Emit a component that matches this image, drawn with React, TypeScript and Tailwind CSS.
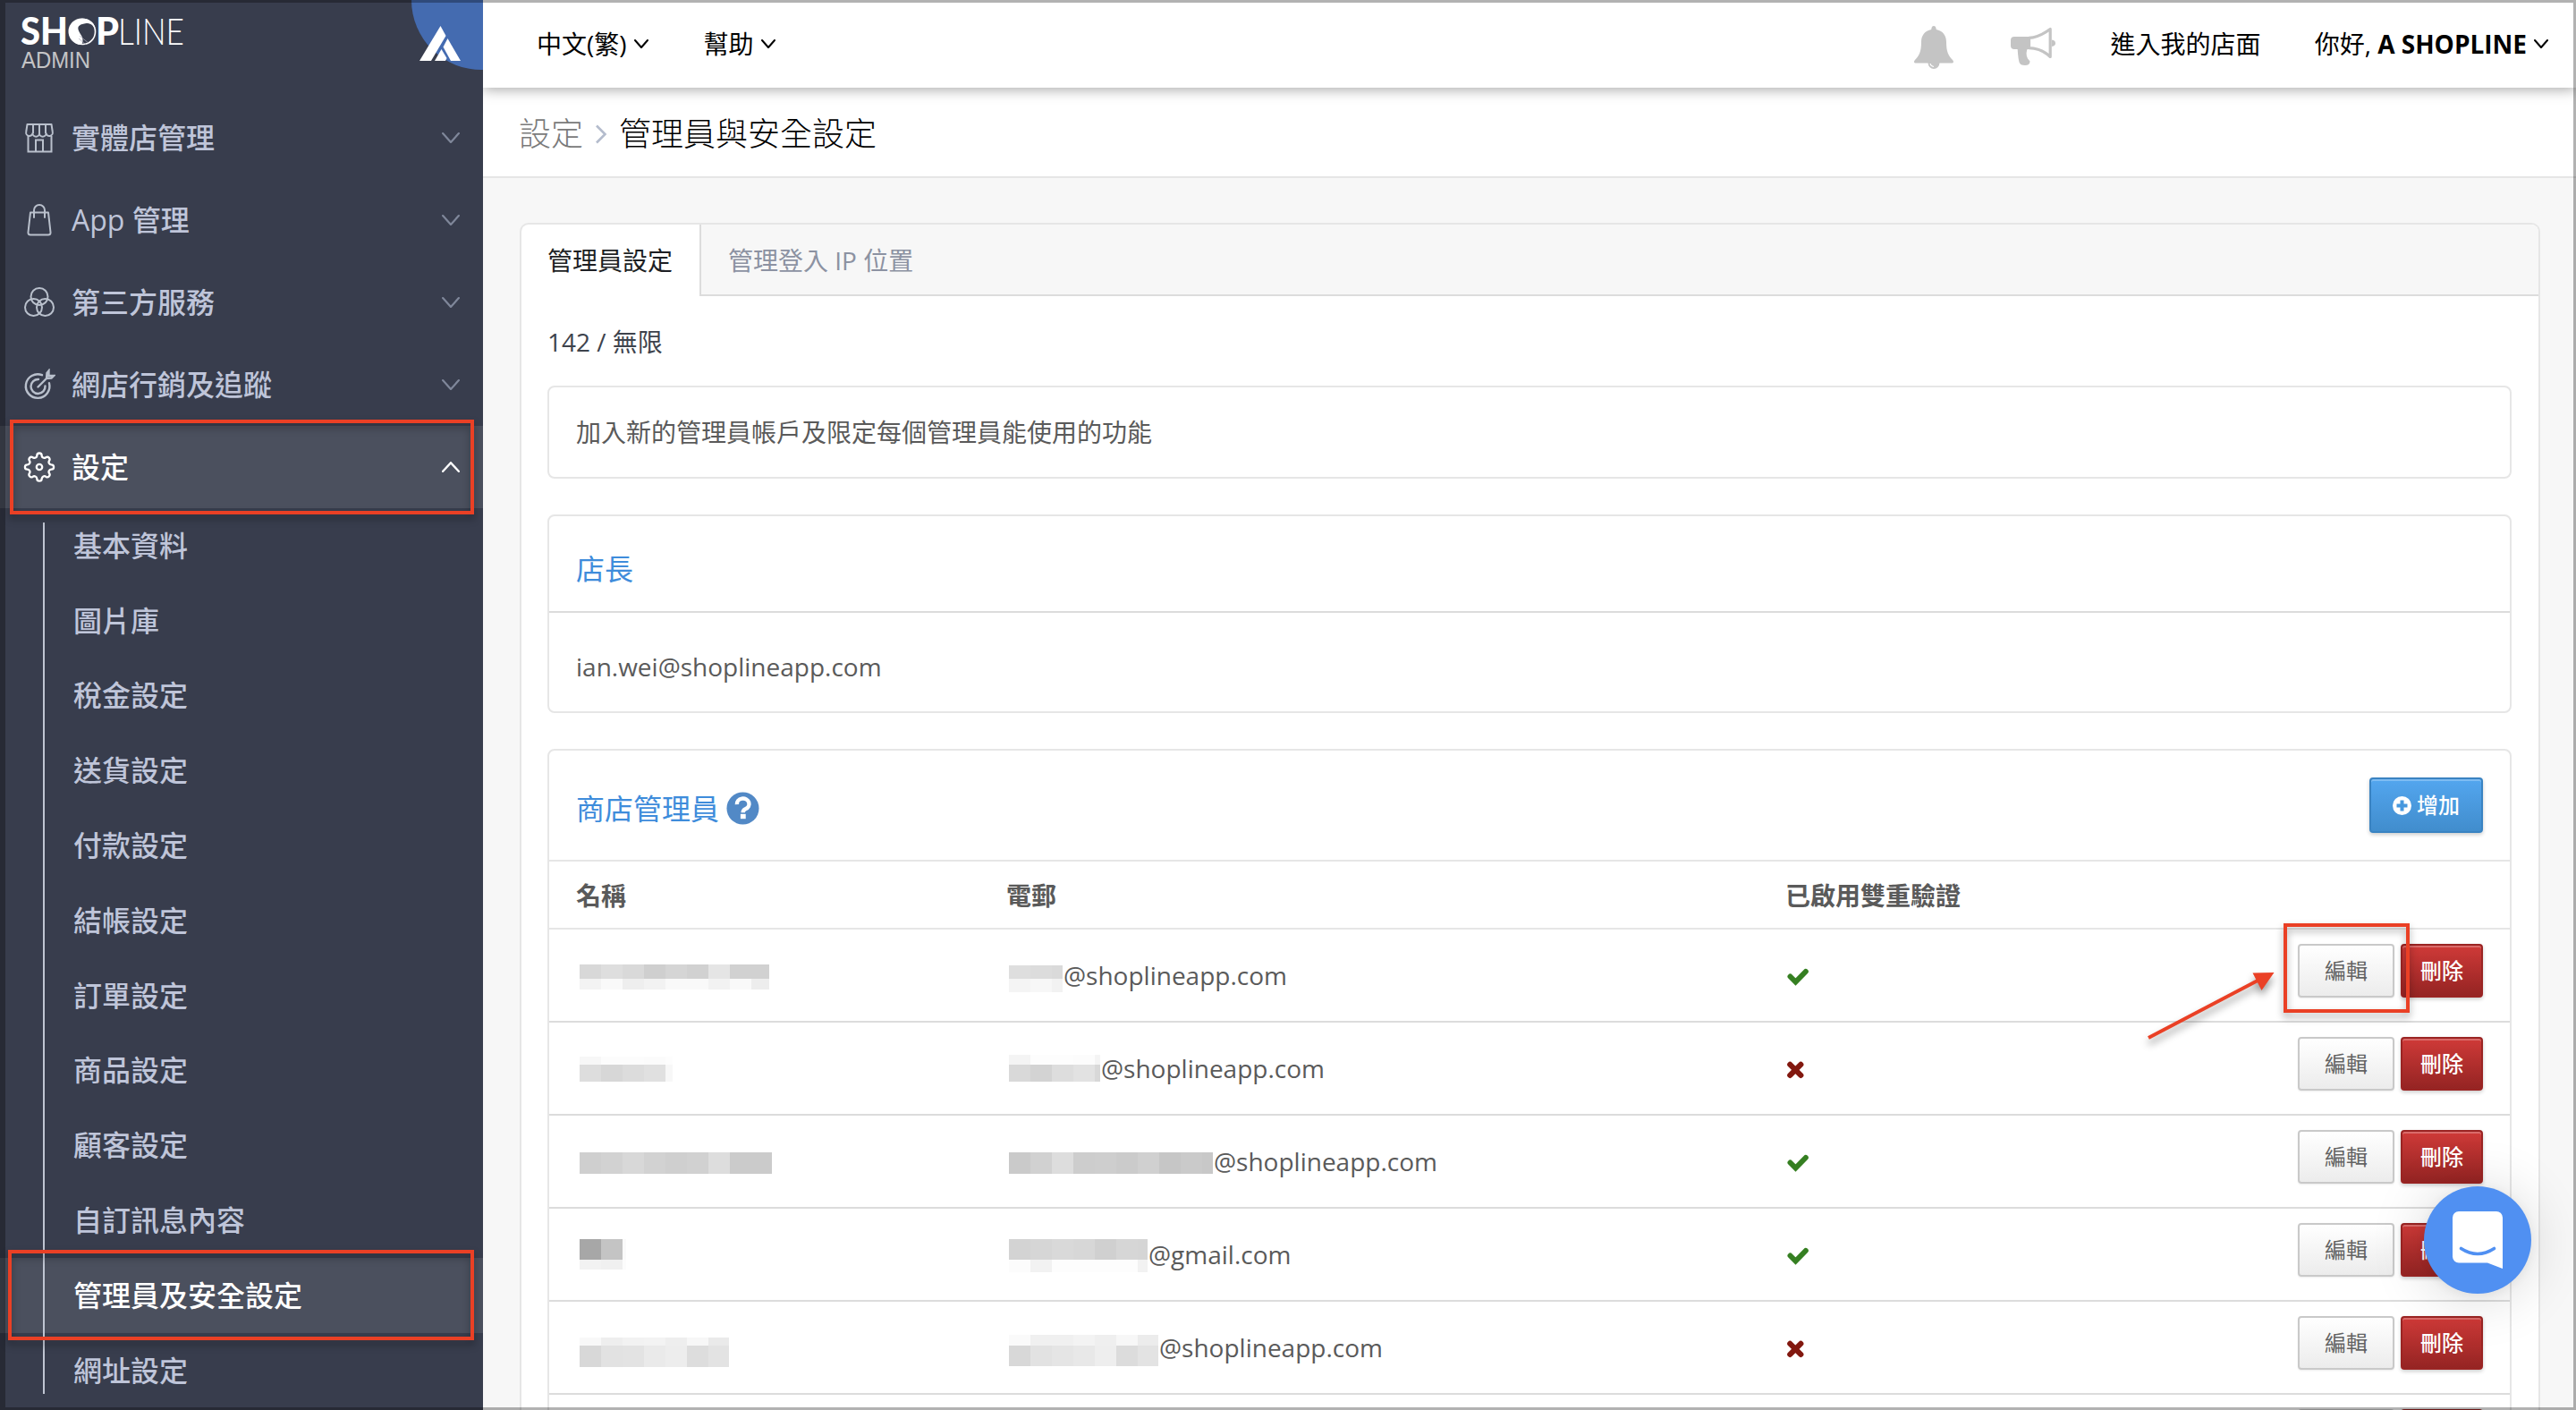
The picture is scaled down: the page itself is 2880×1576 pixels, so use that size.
import React from "react";

type Row = { name: Mosaic; mail: Mosaic; domain: string; ok: boolean };
// y: top edge in the row, hs: heights of the bands, rows: grey level of each 24px cell
type Mosaic = { y: number; w: number; hs: number[]; rows: number[][] };

const ROWS: Row[] = [
  {
    name: { y: 39, w: 212, hs: [16, 12], rows: [[216, 222, 217, 207, 213, 209, 229, 209, 209], [243, 249, 238, 242, 249, 249, 242, 249, 237]] },
    mail: { y: 40, w: 60, hs: [15, 15], rows: [[222, 220, 218], [244, 247, 242]] },
    domain: "@shoplineapp.com",
    ok: true,
  },
  {
    name: { y: 38, w: 104, hs: [9, 19], rows: [[247, 252, 252, 251, 253], [221, 215, 220, 224, 247]] },
    mail: { y: 36, w: 102, hs: [11, 19], rows: [[244, 253, 253, 252, 244], [217, 211, 221, 226, 216]] },
    domain: "@shoplineapp.com",
    ok: false,
  },
  {
    name: { y: 41, w: 215, hs: [24], rows: [[207, 210, 216, 210, 207, 209, 221, 203, 203]] },
    mail: { y: 41, w: 228, hs: [24], rows: [[202, 209, 221, 205, 206, 203, 208, 198, 202, 200]] },
    domain: "@shoplineapp.com",
    ok: true,
  },
  {
    name: { y: 34, w: 52, hs: [23, 11], rows: [[167, 196, 250], [242, 240, 252]] },
    mail: { y: 34, w: 155, hs: [23, 14], rows: [[211, 214, 217, 215, 208, 214, 213], [252, 242, 253, 253, 253, 253, 242]] },
    domain: "@gmail.com",
    ok: true,
  },
  {
    name: { y: 40, w: 167, hs: [9, 24], rows: [[248, 238, 242, 243, 238, 247, 234], [216, 226, 227, 234, 237, 221, 227]] },
    mail: { y: 37, w: 167, hs: [12, 23], rows: [[250, 240, 240, 243, 239, 247, 236], [216, 226, 229, 232, 238, 220, 227]] },
    domain: "@shoplineapp.com",
    ok: false,
  },
];

function MosaicBlock({ m }: { m: Mosaic }) {
  const h = m.hs.reduce((a, b) => a + b, 0);
  let y = 0;
  return (
    <svg width={m.w} height={h} style={{ marginTop: m.y }} className="shrink-0" shapeRendering="crispEdges">
      {m.rows.map((r, i) => {
        const top = y;
        y += m.hs[i];
        return r.map((g, j) => (
          <rect key={`${i}-${j}`} x={j * 24} y={top} width={24} height={m.hs[i]} fill={`rgb(${g},${g},${g})`} />
        ));
      })}
    </svg>
  );
}

function Chevron({ w, h, sw, className = "" }: { w: number; h: number; sw: number; className?: string }) {
  return (
    <svg width={w} height={h} viewBox={`0 0 ${w} ${h}`} fill="none" stroke="currentColor" strokeWidth={sw} strokeLinecap="round" strokeLinejoin="round" className={className}>
      <path d={`M${sw / 2} ${sw / 2} L${w / 2} ${h - sw / 2} L${w - sw / 2} ${sw / 2}`} />
    </svg>
  );
}

const iconProps = { width: 36, height: 36, viewBox: "0 0 36 36", fill: "none", stroke: "currentColor", strokeWidth: 2 } as const;

const StoreIcon = () => (
  <svg {...iconProps}>
    <path d="M4.500 3h27l1.300 8.500a3.600 3.600 0 0 1-7.300 1.500a3.700 3.700 0 0 1-7.500 0a3.700 3.700 0 0 1-7.500 0a3.600 3.600 0 0 1-7.300-1.500zM11 3v10M18 3v10M25 3v10" strokeLinejoin="round" />
    <path d="M5.500 16v17.500h26V16M14 33.500V20.500h8v13" />
  </svg>
);
const BagIcon = () => (
  <svg {...iconProps} strokeLinecap="round">
    <path d="M8 9.500h20l2.500 22q.3 3-2.500 3H8q-2.800 0-2.500-3z" strokeLinejoin="round" />
    <path d="M12 15V7a6 6 0 0 1 12 0V15" />
  </svg>
);
const CirclesIcon = () => (
  <svg {...iconProps}>
    <circle cx="18" cy="11.500" r="9.500" />
    <circle cx="11.500" cy="23.500" r="9.500" />
    <circle cx="24.500" cy="23.500" r="9.500" />
  </svg>
);
const TargetIcon = () => (
  <svg {...iconProps} strokeWidth={2.400} strokeLinecap="round">
    <path d="M21 7.200a13.300 13.300 0 1 0 8 9M17 12a8 8 0 1 0 7.500 7.500" />
    <path d="M16.500 20.500L26 11M26 11l.5-6 2-2.500V8h5.500l-2.500 2.500z" />
  </svg>
);
const GearIcon = () => (
  <svg {...iconProps} strokeWidth={2.300} strokeLinejoin="round">
    <path d="M15.300 5.200a2.700 2.700 0 0 1 5.400 0q0 2 2 2.500t2.900-.6a2.700 2.700 0 0 1 3.600 3.700q-1.200 1.600-.3 3t2.500 1.500a2.700 2.700 0 0 1 0 5.400q-1.600.1-2.500 1.500t.3 3a2.700 2.700 0 0 1-3.700 3.700q-1.600-1.200-3-.4t-1.800 2.400a2.700 2.700 0 0 1-5.400 0q-.3-1.700-1.800-2.400t-3 .4a2.700 2.700 0 0 1-3.700-3.700q1.200-1.600.3-3t-2.500-1.500a2.700 2.700 0 0 1 0-5.400q1.600-.1 2.500-1.500t-.3-3a2.700 2.700 0 0 1 3.600-3.700q.9 1.100 2.900.6t2-2.500z" />
    <circle cx="18" cy="18" r="3.200" />
  </svg>
);

const MENU = [
  { icon: <StoreIcon />, label: "實體店管理" },
  { icon: <BagIcon />, label: "App 管理" },
  { icon: <CirclesIcon />, label: "第三方服務" },
  { icon: <TargetIcon />, label: "網店行銷及追蹤" },
];
const SUB = ["基本資料", "圖片庫", "稅金設定", "送貨設定", "付款設定", "結帳設定", "訂單設定", "商品設定", "顧客設定", "自訂訊息內容", "管理員及安全設定", "網址設定"];

function Sidebar() {
  return (
    <aside className="relative z-10 w-[540px] shrink-0 h-full bg-[#383d4d] text-[#bfc5d9] overflow-hidden text-[32px] leading-none font-medium">
      <div className="h-[108px] pl-6 pt-[18px] relative">
        <div className="flex flex-col items-start text-white">
          <svg width="182" height="34" viewBox="0 0 182 34" className="overflow-visible">
            <g fontFamily="Lato, 'Open Sans', sans-serif" fill="#fff">
              <text x="-1" y="31.500" fontSize="42" fontWeight="900" textLength="53" lengthAdjust="spacingAndGlyphs">SH</text>
              <text x="83" y="31.500" fontSize="42" fontWeight="900" textLength="26" lengthAdjust="spacingAndGlyphs">P</text>
              <text x="108" y="31.500" fontSize="42" fontWeight="300" textLength="74" lengthAdjust="spacingAndGlyphs">LINE</text>
            </g>
            <circle cx="68.500" cy="17.500" r="14" fill="none" stroke="#fff" strokeWidth="1.600" />
            <path d="M68 2.500c7 0 13 4 14.500 11c-3-4-6-5.500-10-5.500c-7 1-10 3-9 7c1.500 5 5 7 5 12c0 3-1 4-2 5a14.500 14.500 0 0 1 1.500-29.500z" fill="#fff" />
            <circle cx="66" cy="14" r="1.800" fill="#383d4d" />
            <path d="M65 22l11 9M64 25l8 7" stroke="#aab" strokeWidth=".7" />
          </svg>
          <svg width="80" height="24" viewBox="0 0 80 24" className="mt-1 overflow-visible">
            <text x="0" y="19.500" fontFamily="'Liberation Sans', sans-serif" fontSize="26" fontWeight="400" fill="#c4c4c6" textLength="77" lengthAdjust="spacingAndGlyphs">ADMIN</text>
          </svg>
        </div>
        <svg className="absolute right-0 top-0" width="80" height="80" viewBox="0 0 80 80">
          <path d="M0 0A78 78 0 0 0 80 78V0z" fill="#446bb0" />
          <path d="M32.500 29L38.500 40L22 68H9z" fill="#fff" />
          <path d="M40.500 43L55 68H44L35.500 52.500z" fill="#fff" />
          <path d="M33.500 55L39.500 65L38 68H26z" fill="#fff" />
        </svg>
      </div>
      {MENU.map((m) => (
        <div key={m.label} className="h-[92px] flex items-center pl-[26px] pr-[26px]">
          <span className="w-[36px] mr-[18px] text-[#b9c0cc]">{m.icon}</span>
          <span>{m.label}</span>
          <Chevron w={20} h={12} sw={2.200} className="ml-auto text-[#7f879a]" />
        </div>
      ))}
      <div className="h-[92px] flex items-center pl-[26px] pr-[26px] bg-[#4b505e] text-white">
        <span className="w-[36px] mr-[18px]">
          <GearIcon />
        </span>
        <span>設定</span>
        <Chevron w={20} h={12} sw={2.400} className="ml-auto rotate-180" />
      </div>
      <div className="relative">
        {SUB.map((s) => (
          <div key={s} className={`h-[83.8px] flex items-center pl-[82px] ${s === "管理員及安全設定" ? "bg-[#4b505e] text-white" : ""}`}>
            {s}
          </div>
        ))}
        <div className="absolute left-[48px] top-[16px] w-[2px] h-[974px] bg-[#bfc5d2]" />
      </div>
    </aside>
  );
}

function TopBar() {
  return (
    <header className="relative h-[98px] shrink-0 bg-white shadow-[0_2px_14px_rgba(0,0,0,0.35)] flex items-center text-black pl-[60px] pr-[31px] pb-px">
      <span>中文(繁)</span>
      <Chevron w={16} h={10} sw={2} className="ml-2" />
      <span className="ml-[62px]">幫助</span>
      <Chevron w={16} h={10} sw={2} className="ml-2" />
      <svg className="ml-auto mt-[8px]" width="46" height="50" viewBox="0 0 46 50" fill="#c4c4c4">
        <path d="M23 1c1.800 0 2.400 1.500 2.800 4C33 6.500 37 11.500 37 19c0 11 2.500 15.500 7 20c1.800 2 1 3.500-1 3.500H3c-2 0-2.800-1.500-1-3.500c4.500-4.500 7-9 7-20C9 11.500 13 6.500 20.200 5c.4-2.500 1-4 2.800-4z" />
        <path d="M16.500 42h13a6.500 7 0 0 1-13 0z" />
        <path d="M19 43q.5 3 4 3.500" stroke="#fff" strokeWidth="1.200" fill="none" />
      </svg>
      <svg className="ml-[63px] mt-[7px]" width="52" height="44" viewBox="0 0 52 44" fill="#c4c4c4">
        <path d="M4 11h18v14H4q-4 0-4-4v-6q0-4 4-4z" />
        <path d="M7.500 23h12c-2.500 4.500-2.500 8.500-.5 12.500l2.500 3c0 3-2 4.500-5.500 4.500q-5.500 0-6.500-3.500C8 34 8 28 7.500 23z" />
        <path d="M20.500 12.300C30 12 38 7 44.200 2.500v31C38 27.500 30 24 20.500 23.700z" fill="none" stroke="#c4c4c4" strokeWidth="3.200" strokeLinejoin="round" />
        <path d="M46 14.500q4 .5 4 3.700t-4 3.700z" />
      </svg>
      <span className="ml-[60px]">進入我的店面</span>
      <span className="ml-[60px]">
        你好, <b className="font-bold">A SHOPLINE</b>
      </span>
      <Chevron w={16} h={10} sw={2} className="ml-2" />
    </header>
  );
}

function Actions() {
  return (
    <div className="ml-auto flex pt-[16px] pr-[30px] gap-[7px] text-[24px] leading-none">
      <button className="w-[108px] h-[60px] rounded-[4px] border-2 border-[#c9c9c9] bg-linear-to-b from-white to-[#ececec] text-[#636363] pb-px shadow-[0_1px_2px_rgba(0,0,0,0.08)]">編輯</button>
      <button className="w-[92px] h-[60px] rounded-[4px] border-2 border-[#9a2423] bg-linear-to-b from-[#cf3a38] to-[#952423] text-white font-medium pb-px shadow-[inset_0_2px_0_rgba(255,255,255,0.25),0_2px_4px_rgba(0,0,0,0.2)]">刪除</button>
    </div>
  );
}

export default function App() {
  return (
    <div className="relative flex w-[2880px] h-[1576px] overflow-hidden bg-[#f7f7f7] text-[28px] leading-none font-['Open_Sans','Noto_Sans_CJK_TC',sans-serif]">
      <Sidebar />
      <main className="flex-1 flex flex-col min-w-0">
        <TopBar />
        <div className="h-[101px] shrink-0 bg-white border-b-2 border-[#e6e6e6] flex items-center pl-[40px] pt-[4px] text-[36px] font-extralight">
          <span className="text-[#7a7a7a]">設定</span>
          <svg width="14" height="22" viewBox="0 0 14 22" fill="none" stroke="#b4bccd" strokeWidth="2.600" className="ml-[13px] mr-[13px]">
            <path d="M2 1.500L11.500 11L2 20.500" />
          </svg>
          <span className="text-black">管理員與安全設定</span>
        </div>
        <div className="relative mt-[50px] ml-[41px] mr-[40px] flex-1 border-2 border-b-0 border-[#e6e6e6] rounded-t-[10px] bg-white overflow-hidden">
          <div className="flex h-[80px] items-stretch">
            <div className="w-[199px] shrink-0 pl-[29px] flex items-center text-[#1d1f24]">管理員設定</div>
            <div className="flex-1 flex items-center pt-px pl-[30px] bg-[#f7f7f7] border-l-2 border-b-2 border-[#dcdcdc] text-[#8c92a2]">管理登入 IP 位置</div>
          </div>
          <div className="pl-[29px] pr-[30px]">
            <div className="h-[100px] flex items-center text-[#3e434d] pt-px">142 / 無限</div>
            <div className="h-[104px] border-2 border-[#e6e6e6] rounded-[8px] flex items-center pl-[30px] text-[#5a5a5a] mb-[40px]">加入新的管理員帳戶及限定每個管理員能使用的功能</div>
            <div className="h-[222px] border-2 border-[#e6e6e6] rounded-[8px] text-[#5a5a5a] mb-[40px]">
              <div className="h-[108px] border-b-2 border-[#dcdcdc] flex items-center pt-[11px] pl-[30px] text-[32px] text-[#3e8cdb]">店長</div>
              <div className="h-[110px] flex items-center pt-[9px] pl-[30px]">ian.wei@shoplineapp.com</div>
            </div>
            <div className="h-[760px] border-2 border-[#e6e6e6] rounded-[8px] text-[#5a5a5a]">
              <div className="h-[124px] border-b-2 border-[#e6e6e6] flex items-center pl-[30px] pr-[30px] text-[32px] text-[#3e8cdb]">
                <span className="pt-[7px]">商店管理員</span>
                <svg width="37" height="37" viewBox="0 0 38 38" className="ml-[8px] mt-[7px]">
                  <circle cx="19" cy="19" r="18.500" fill="#5289c6" />
                  <path d="M12.200 14.500a7 6.300 0 1 1 9.800 5.300q-2.800 1.400-2.800 4" fill="none" stroke="#fff" strokeWidth="4.600" />
                  <rect x="16.300" y="25.500" width="6" height="5.500" fill="#fff" />
                </svg>
                <button className="ml-auto w-[127px] h-[62px] rounded-[4px] border-2 border-[#3a83c2] bg-linear-to-b from-[#53a6ef] to-[#418dcd] text-white text-[24px] flex items-center justify-center gap-[6px] font-medium shadow-[inset_0_2px_0_rgba(255,255,255,0.25),0_2px_4px_rgba(0,0,0,0.2)]">
                  <svg width="21" height="21" viewBox="0 0 21 21">
                    <circle cx="10.500" cy="10.500" r="10.500" fill="#fff" />
                    <path d="M10.500 4.500v12M4.500 10.500h12" stroke="#4798de" strokeWidth="4" />
                  </svg>
                  <span>增加</span>
                </button>
              </div>
              <div className="h-[76px] border-b-2 border-[#e6e6e6] flex items-center pt-px pl-[30px] font-bold">
                <span className="w-[481px]">名稱</span>
                <span className="w-[871px]">電郵</span>
                <span>已啟用雙重驗證</span>
              </div>
              {ROWS.map((r, i) => (
                <div key={i} className="h-[104px] border-b-2 border-[#dcdcdc] flex pl-[34px]">
                  <div className="w-[480px] flex items-start">
                    <MosaicBlock m={r.name} />
                  </div>
                  <div className="w-[869px] flex items-start">
                    <MosaicBlock m={r.mail} />
                    <span className="pt-[37px] pl-[1px]">{r.domain}</span>
                  </div>
                  {r.ok ? (
                    <svg width="26" height="22" viewBox="0 0 26 22" className="mt-[42px]">
                      <path d="M4.500 10.500L10.500 16.500L21.800 5" fill="none" stroke="#357f21" strokeWidth="6" strokeLinecap="round" />
                    </svg>
                  ) : (
                    <svg width="20" height="20" viewBox="0 0 20 20" className="mt-[43px]">
                      <path d="M4.300 3.900L16.300 15.900M16.300 3.900L4.300 15.900" fill="none" stroke="#82180f" strokeWidth="6.200" strokeLinecap="round" />
                    </svg>
                  )}
                  <Actions />
                </div>
              ))}
              <div className="flex">
                <Actions />
              </div>
            </div>
          </div>
        </div>
      </main>

      {/* chat launcher */}
      <div className="absolute z-20 left-[2710px] top-[1326px] size-[120px] rounded-full bg-[#5090f2] flex items-center justify-center shadow-[0_2px_12px_rgba(0,0,0,0.06),0_4px_64px_rgba(0,0,0,0.16)]">
        <svg width="56" height="64" viewBox="0 0 56 64">
          <path d="M7 0H49a7 7 0 0 1 7 7V64L39 57.500H7a7 7 0 0 1-7-7V7a7 7 0 0 1 7-7z" fill="#fff" />
          <path d="M9.500 41.500q18.500 12 37 0" fill="none" stroke="#5090f2" strokeWidth="3.600" strokeLinecap="round" />
        </svg>
      </div>

      {/* annotations */}
      <div className="absolute z-20 left-[11px] top-[469px] w-[519px] h-[106px] border-4 border-[#ea4025] drop-shadow-[0_5px_4px_rgba(0,0,0,0.35)]" />
      <div className="absolute z-20 left-[9px] top-[1397px] w-[521px] h-[101px] border-4 border-[#ea4025] drop-shadow-[0_5px_4px_rgba(0,0,0,0.35)]" />
      <div className="absolute z-20 left-[2553px] top-[1032px] w-[141px] h-[100px] border-4 border-[#ea4025] drop-shadow-[0_5px_4px_rgba(0,0,0,0.35)]" />
      <svg className="absolute z-20 left-[2390px] top-[1070px] drop-shadow-[0_6px_4px_rgba(0,0,0,0.4)]" width="170" height="110" viewBox="0 0 170 110">
        <path d="M12 90L136 25" stroke="#ea4025" strokeWidth="4" />
        <path d="M152.500 17L128.500 17.500L138.500 37z" fill="#ea4025" />
      </svg>

      {/* screen edge */}
      <div className="absolute z-30 inset-0 border-[3px] border-l-[6px] border-black/30 pointer-events-none" />
    </div>
  );
}
